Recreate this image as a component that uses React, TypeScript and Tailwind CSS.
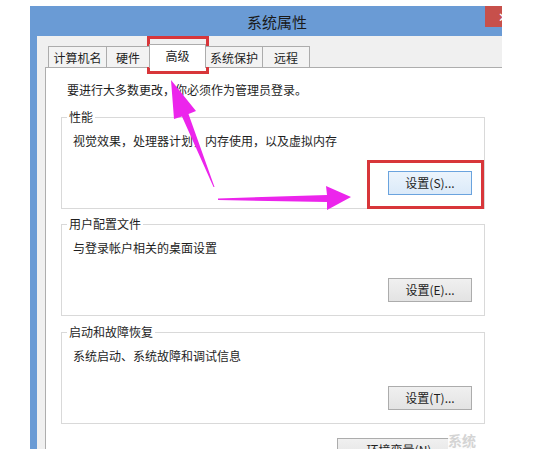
import React from 'react';

const tabs = [
  { label: '计算机名', w: 'w-[59px]' },
  { label: '硬件', w: 'w-[44px]' },
  { label: '高级', w: 'w-[57px]', active: true },
  { label: '系统保护', w: 'w-[58px]' },
  { label: '远程', w: 'w-[48px]' },
];

function WinButton({ label, primary }: { label: string; primary?: boolean }) {
  return (
    <div
      className={
        primary
          ? 'w-[84px] h-[24px] flex items-center justify-center border border-[#6aa3de] bg-gradient-to-b from-[#ecf4fc] to-[#dbeaf9] text-[12px] text-[#1e1e1e]'
          : 'w-[84px] h-[24px] flex items-center justify-center border border-[#acacac] bg-gradient-to-b from-[#f0f0f0] to-[#e3e3e3] text-[12px] text-[#1e1e1e]'
      }
    >
      {label}
    </div>
  );
}

function Group({ title, text, button, primary, className }: { title: string; text: string; button: string; primary?: boolean; className?: string }) {
  return (
    <fieldset className={'ml-[15px] w-[424px] border border-[#d9d9d9] p-0 ' + (className ?? '')}>
      <legend className="ml-[5px] px-[2px] text-[12px] leading-[14px] text-[#1e1e1e]">{title}</legend>
      <div className="pl-[11px] pr-[12px] pt-[9px] pb-[13px]">
        <div className="text-[12px] leading-[16px] text-[#1e1e1e]">{text}</div>
        <div className="flex justify-end mt-[22px]">
          <WinButton label={button} primary={primary} />
        </div>
      </div>
    </fieldset>
  );
}

export default function App() {
  return (
    <div className="w-[535px] h-[460px] bg-white relative overflow-hidden font-['Noto_Sans_CJK_SC','Microsoft_YaHei',sans-serif]">
      <div className="ml-[30px] pt-[6px]">
        <div className="w-[472px] h-[443px] flex flex-col overflow-hidden">
          {/* title bar */}
          <div className="h-[30px] shrink-0 bg-[#6a9bd5] flex overflow-hidden">
            <div className="w-[455px] shrink-0 pl-[217px] pt-[7px] text-[15px] leading-[18px] text-[#1a1a1a]">系统属性</div>
            <div className="w-[36px] h-[21px] shrink-0 bg-[#c7504b] text-white flex items-center justify-center text-[13px] leading-none">✕</div>
          </div>

          {/* body */}
          <div className="flex-1 flex min-h-0">
            <div className="w-[7px] shrink-0 bg-[#6a9bd5]" />
            <div className="flex-1 min-w-0 bg-[#f0f0f0] pl-[8px] pt-[8px] flex flex-col">
              <div className="flex items-end h-[23px] pl-[3px] relative z-10">
                {tabs.map((t, i) =>
                  t.active ? (
                    <div
                      key={t.label}
                      className={`${t.w} h-[24px] -mb-px -ml-px bg-white border-t border-l border-r border-[#acacac] text-center text-[12px] leading-[14px] pt-[4px] text-[#1e1e1e]`}
                    >
                      {t.label}
                    </div>
                  ) : (
                    <div
                      key={t.label}
                      className={`${t.w} h-[21px] ${i > 0 ? '-ml-px' : ''} bg-[#f3f3f3] border-t border-l border-r border-[#acacac] text-center text-[12px] leading-[14px] pt-[4px] text-[#1e1e1e]`}
                    >
                      {t.label}
                    </div>
                  )
                )}
              </div>

              <div className="flex-1 bg-white border-l border-t border-[#adadad] pt-[14px]">
                <div className="pl-[21px] text-[12px] leading-[16px] text-[#1e1e1e]">要进行大多数更改，你必须作为管理员登录。</div>
                <Group className="mt-[12px]" title="性能" text="视觉效果，处理器计划，内存使用，以及虚拟内存" button="设置(S)..." primary />
                <Group className="mt-[8px]" title="用户配置文件" text="与登录帐户相关的桌面设置" button="设置(E)..." />
                <Group className="mt-[9px]" title="启动和故障恢复" text="系统启动、系统故障和调试信息" button="设置(T)..." />
                <div className="flex justify-end w-[425px] mt-[14px]">
                  <div className="w-[134px] h-[24px] flex items-center justify-center border border-[#acacac] bg-gradient-to-b from-[#f0f0f0] to-[#e3e3e3] text-[12px] text-[#1e1e1e]">
                    环境变量(N)...
                  </div>
                </div>
              </div>
            </div>
          </div>
        </div>
      </div>

      {/* annotations */}
      <div className="absolute left-[147px] top-[36px] w-[62px] h-[38px] border-[3px] border-[#d8363a]" />
      <div className="absolute left-[367px] top-[160px] w-[117px] h-[49px] border-[3px] border-[#d8363a]" />
      <svg className="absolute left-0 top-0 pointer-events-none" width="535" height="460" viewBox="0 0 535 460">
        <polygon
          fill="#ec25ec"
          points="171,80 196,111 188.5,114 214.5,187 213.5,187 182,116.5 174,119"
        />
        <polygon
          fill="#ec25ec"
          points="218,198.5 327,195 326,186 351,197 327,210 327,202 218,200"
        />
      </svg>
      <div className="absolute left-[448px] top-[432px] w-[37px] h-[17px] bg-white/85 overflow-hidden text-[14px] leading-[17px] font-bold text-[#d4d4d4]">
        系统之
      </div>
    </div>
  );
}
